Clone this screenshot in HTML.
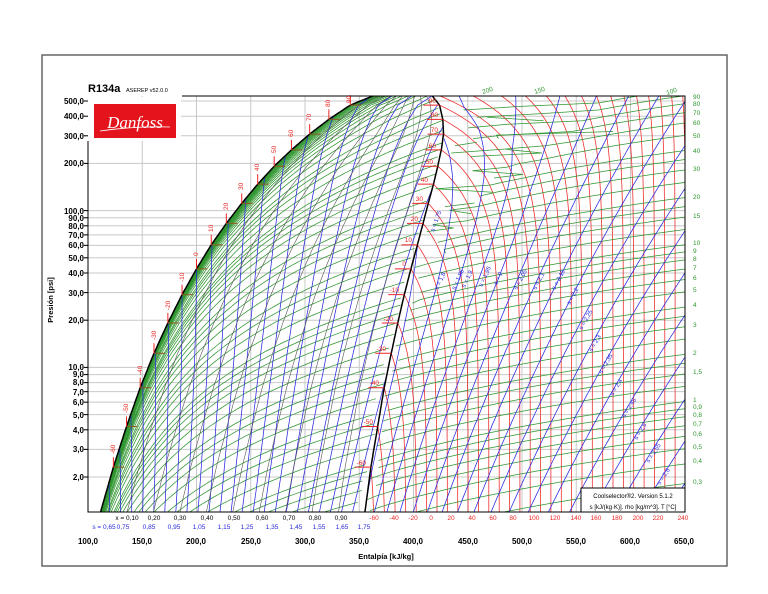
<!DOCTYPE html>
<html><head><meta charset="utf-8">
<style>
html,body{margin:0;padding:0;background:#fff;}
svg{display:block;font-family:"Liberation Sans",sans-serif;}
</style></head>
<body>
<svg id="s" width="768" height="594" viewBox="0 0 768 594" xmlns="http://www.w3.org/2000/svg">
<rect x="0" y="0" width="768" height="594" fill="#fff"/>
<rect x="42" y="55" width="685" height="511" fill="#fff" stroke="#666" stroke-width="1.5"/>
<defs><clipPath id="cp"><rect x="88" y="96" width="597" height="416"/></clipPath></defs>
<g id="grid" stroke="#c8c8c8" stroke-width="1" fill="none"></g>
<g clip-path="url(#cp)" fill="none" stroke-width="0.75">
<g id="gRed" stroke="#ee2424"></g>
<g id="gGreen" stroke="#2f962f"></g>
<g id="gBlue" stroke="#2828e0"></g>
<g id="gBlack" stroke="#555" stroke-width="0.6"></g>
<g id="gSat" stroke="#000" stroke-width="1.5"></g>
</g>
<g id="ticks" stroke-width="1"></g>
<rect x="88" y="97" width="93" height="44" fill="#fff"/>
<rect x="94" y="104" width="82" height="34" fill="#e3141c"/>
<text x="135" y="128" font-family="Liberation Serif,serif" font-style="italic" font-size="17" fill="#fff" text-anchor="middle">Danfoss</text>
<path d="M100 131 Q135 126 170 127" stroke="#fff" stroke-width="0.8" fill="none"/>
<path d="M88 141 V512 H685 V96 H182" stroke="#000" stroke-width="1" fill="none"/>
<text x="88" y="92" font-size="11" font-weight="bold" fill="#000">R134a</text>
<text x="126" y="92" font-size="5.5" fill="#000">ASEREP v52.0.0</text>
<g font-size="8" font-weight="bold" fill="#000" text-anchor="end">
<text x="84" y="104">500,0</text>
<text x="84" y="119">400,0</text>
<text x="84" y="139">300,0</text>
<text x="84" y="166">200,0</text>
<text x="84" y="214">100,0</text>
<text x="84" y="221">90,0</text>
<text x="84" y="229">80,0</text>
<text x="84" y="238">70,0</text>
<text x="84" y="248">60,0</text>
<text x="84" y="261">50,0</text>
<text x="84" y="276">40,0</text>
<text x="84" y="296">30,0</text>
<text x="84" y="323">20,0</text>
<text x="84" y="370">10,0</text>
<text x="84" y="377">9,0</text>
<text x="84" y="385">8,0</text>
<text x="84" y="395">7,0</text>
<text x="84" y="405">6,0</text>
<text x="84" y="418">5,0</text>
<text x="84" y="433">4,0</text>
<text x="84" y="452">3,0</text>
<text x="84" y="480">2,0</text>
</g>
<text transform="translate(53,300) rotate(-90)" font-size="7.5" font-weight="bold" text-anchor="middle">Presión [psi]</text>
<g font-size="8" font-weight="bold" fill="#000" text-anchor="middle">
<text x="88" y="544">100,0</text><text x="142" y="544">150,0</text><text x="196" y="544">200,0</text>
<text x="251" y="544">250,0</text><text x="305" y="544">300,0</text><text x="359" y="544">350,0</text>
<text x="413" y="544">400,0</text><text x="468" y="544">450,0</text><text x="522" y="544">500,0</text>
<text x="576" y="544">550,0</text><text x="630" y="544">600,0</text><text x="684" y="544">650,0</text>
</g>
<text x="386" y="559" font-size="7.5" font-weight="bold" text-anchor="middle">Entalpía [kJ/kg]</text>
<g font-size="6.5" fill="#000" text-anchor="middle">
<text x="127" y="520">x = 0,10</text><text x="154" y="520">0,20</text><text x="180" y="520">0,30</text>
<text x="207" y="520">0,40</text><text x="234" y="520">0,50</text><text x="262" y="520">0,60</text>
<text x="289" y="520">0,70</text><text x="315" y="520">0,80</text><text x="341" y="520">0,90</text>
</g>
<g font-size="6.5" fill="#2828e0" text-anchor="middle">
<text x="104" y="529">s = 0,65</text><text x="123" y="529">0,75</text><text x="149" y="529">0,85</text>
<text x="174" y="529">0,95</text><text x="199" y="529">1,05</text><text x="224" y="529">1,15</text>
<text x="247" y="529">1,25</text><text x="272" y="529">1,35</text><text x="296" y="529">1,45</text>
<text x="319" y="529">1,55</text><text x="342" y="529">1,65</text><text x="364" y="529">1,75</text>
</g>
<g font-size="6.5" fill="#ee2424" text-anchor="middle">
<text x="374" y="520">-60</text><text x="394" y="520">-40</text><text x="413" y="520">-20</text>
<text x="431" y="520">0</text><text x="451" y="520">20</text><text x="472" y="520">40</text>
<text x="493" y="520">60</text><text x="513" y="520">80</text><text x="534" y="520">100</text>
<text x="555" y="520">120</text><text x="576" y="520">140</text><text x="596" y="520">160</text>
<text x="617" y="520">180</text><text x="638" y="520">200</text><text x="658" y="520">220</text>
<text x="683" y="520">240</text>
</g>
<g font-size="6.5" fill="#2f962f">
<text x="693" y="99">90</text><text x="693" y="106">80</text><text x="693" y="115">70</text>
<text x="693" y="125">60</text><text x="693" y="138">50</text><text x="693" y="153">40</text>
<text x="693" y="171">30</text><text x="693" y="199">20</text><text x="693" y="218">15</text>
<text x="693" y="245">10</text><text x="693" y="253">9</text><text x="693" y="261">8</text>
<text x="693" y="270">7</text><text x="693" y="280">6</text><text x="693" y="292">5</text>
<text x="693" y="307">4</text><text x="693" y="327">3</text><text x="693" y="355">2</text>
<text x="693" y="374">1,5</text><text x="693" y="402">1</text><text x="693" y="409">0,9</text>
<text x="693" y="417">0,8</text><text x="693" y="426">0,7</text><text x="693" y="436">0,6</text>
<text x="693" y="449">0,5</text><text x="693" y="463">0,4</text><text x="693" y="484">0,3</text>
<text transform="translate(483,94) rotate(-18)">200</text>
<text transform="translate(535,94) rotate(-18)">150</text>
<text transform="translate(667,95) rotate(-18)">100</text>
</g>
<g font-size="6.5" fill="#ee2424">
<text transform="translate(115,454) rotate(-90)">-60</text>
<text transform="translate(128,413) rotate(-90)">-50</text>
<text transform="translate(142,375) rotate(-90)">-40</text>
<text transform="translate(156,340) rotate(-90)">-30</text>
<text transform="translate(170,310) rotate(-90)">-20</text>
<text transform="translate(184,282) rotate(-90)">-10</text>
<text transform="translate(198,256) rotate(-90)">0</text>
<text transform="translate(213,232) rotate(-90)">10</text>
<text transform="translate(228,210) rotate(-90)">20</text>
<text transform="translate(243,190) rotate(-90)">30</text>
<text transform="translate(259,171) rotate(-90)">40</text>
<text transform="translate(276,153) rotate(-90)">50</text>
<text transform="translate(293,137) rotate(-90)">60</text>
<text transform="translate(311,121) rotate(-90)">70</text>
<text transform="translate(330,107) rotate(-90)">80</text>
<text transform="translate(351,103) rotate(-90)">90</text>
</g>
<g font-size="6.5" fill="#ee2424" text-anchor="end">
<text x="366" y="465">-60</text><text x="373" y="424">-50</text><text x="379" y="385">-40</text>
<text x="386" y="351">-30</text><text x="393" y="321">-20</text><text x="399" y="292">-10</text>
<text x="406" y="266">0</text><text x="412" y="242">10</text><text x="418" y="221">20</text>
<text x="423" y="201">30</text><text x="428" y="182">40</text><text x="433" y="164">50</text>
<text x="436" y="148">60</text><text x="438" y="132">70</text><text x="438" y="117">80</text>
<text x="436" y="103">90</text>
</g>
<g font-size="6" fill="#2828e0">
<text transform="translate(434,232) rotate(-70)">s = 1,75</text>
<text transform="translate(438,290) rotate(-65)">s = 1,8</text>
<text transform="translate(455,290) rotate(-65)">s = 1,85</text>
<text transform="translate(465,288) rotate(-65)">s = 1,9</text>
<text transform="translate(482,287) rotate(-65)">s = 1,95</text>
<text transform="translate(497,285) rotate(-65)">s = 2</text>
<text transform="translate(517,290) rotate(-62)">s = 2,05</text>
<text transform="translate(536,290) rotate(-62)">s = 2,1</text>
<text transform="translate(555,290) rotate(-62)">s = 2,15</text>
<text transform="translate(570,305) rotate(-62)">s = 2,2</text>
<text transform="translate(582,330) rotate(-60)">s = 2,25</text>
<text transform="translate(592,352) rotate(-60)">s = 2,3</text>
<text transform="translate(602,374) rotate(-60)">s = 2,35</text>
<text transform="translate(613,396) rotate(-58)">s = 2,4</text>
<text transform="translate(625,418) rotate(-58)">s = 2,45</text>
<text transform="translate(637,440) rotate(-58)">s = 2,5</text>
<text transform="translate(649,463) rotate(-56)">s = 2,55</text>
<text transform="translate(660,485) rotate(-56)">s = 2,6</text>
</g>
<rect x="581" y="488" width="104" height="24" fill="#fff" stroke="#000" stroke-width="1"/>
<text x="633" y="498" font-size="6" text-anchor="middle">Coolselector®2. Version 5.1.2</text>
<text x="633" y="509" font-size="6" text-anchor="middle">s [kJ/(kg·K)]. rho [kg/m^3]. T [°C]</text>
</svg>
<script>
(function(){
var NS="http://www.w3.org/2000/svg";
var L5=Math.log10(500);
function Y(p){return 101+(L5-Math.log10(p))*156.8;}
function HX(h){return 88+1.085*(h-100);}
function XI(T){return 375+(T+60)*1.035;}
var sat=[[-70,1.16,111,355],[-60,2.31,123.4,360.7],[-50,4.2,135.5,367],[-40,7.42,148.1,373],[-30,12.3,160.8,379.5],[-20,19.2,173.6,385.5],[-10,29.1,186.7,391.5],[0,42.5,200,397.6],[10,60.5,213.6,403.6],[20,82.9,227.5,408.8],[30,111.2,241.7,413.6],[40,147.4,256.4,418.4],[50,191.8,271.6,422.4],[60,243.9,287.5,425.6],[70,307.5,304.3,427.7],[80,381.9,322,427],[90,470.5,341.7,424],[100,576,373,414]];
var zt=[[-70,.02],[-60,.03],[-40,.05],[-20,.08],[0,.11],[20,.16],[40,.22],[60,.30],[80,.40],[90,.48],[100,.6]];
function S(T){
 if(T<-70)T=-70;if(T>100)T=100;
 var i=Math.min(16,Math.floor((T+70)/10));var a=sat[i],b=sat[i+1];var f=(T-a[0])/10;
 return {p:Math.exp(Math.log(a[1])+f*(Math.log(b[1])-Math.log(a[1]))),hL:a[2]+f*(b[2]-a[2]),hV:a[3]+f*(b[3]-a[3])};
}
function Tsat(p){
 if(p<=1.16)return -71; if(p>=576)return 100.5;
 for(var i=0;i<17;i++){if(p<=sat[i+1][1]){var a=sat[i],b=sat[i+1];var f=(Math.log(p)-Math.log(a[1]))/(Math.log(b[1])-Math.log(a[1]));return a[0]+10*f;}}
 return 100;
}
function xvP(p){var t=Tsat(p);if(t>100)return -1e9;return HX(S(t).hV);}
var d100=XI(100)-HX(414);
function diffT(T){if(T<=100)return Math.max(0,XI(T)-HX(S(T).hV));return d100*Math.exp(-(T-100)/150);}
function Ps(T){if(T<=100)return S(T).p;return 576*Math.exp(0.012*(T-100));}
function zv(T){if(T>100)return .6*Math.exp(-(T-100)/150);if(T<-70)return .02;for(var i=0;i<zt.length-1;i++){if(T<=zt[i+1][0]){var f=(T-zt[i][0])/(zt[i+1][0]-zt[i][0]);return zt[i][1]+f*(zt[i+1][1]-zt[i][1]);}}return .6;}
function rr(T,p){return Math.pow(Math.min(1,p/Ps(T)),1.6);}
function dep(T,p){return diffT(T)*rr(T,p);}
function Z(T,p){return Math.max(0.3,1-zv(T)*rr(T,p));}
function add(g,segs){var d="";segs.forEach(function(s){if(s.length<2)return;d+="M"+s.map(function(q){return q[0].toFixed(1)+" "+q[1].toFixed(1);}).join("L");});if(!d)return;var e=document.createElementNS(NS,"path");e.setAttribute("d",d);document.getElementById(g).appendChild(e);}
function collect(fn,n){var segs=[],cur=[];for(var i=0;i<=n;i++){var q=fn(i/n);if(q){cur.push(q);}else{if(cur.length)segs.push(cur);cur=[];}}if(cur.length)segs.push(cur);return segs;}
var grid=document.getElementById("grid");
function gl(x1,y1,x2,y2){var e=document.createElementNS(NS,"line");e.setAttribute("x1",x1);e.setAttribute("y1",y1);e.setAttribute("x2",x2);e.setAttribute("y2",y2);grid.appendChild(e);}
for(var h=150;h<650;h+=50){gl(HX(h),96,HX(h),512);}
[500,400,300,200,100,90,80,70,60,50,40,30,20,10,9,8,7,6,5,4,3,2].forEach(function(p){var y=Y(p);gl(80,y,685,y);});
add("gSat",collect(function(t){var T=-72+t*172;var s=S(T);var p=T<-70?1.16*Math.exp((T+70)*0.085):s.p;return [HX(s.hL-(T<-70?( -70-T)*1.2:0)),Y(p)];},200));
add("gSat",collect(function(t){var T=-72+t*172;var s=S(T);var p=T<-70?1.16*Math.exp((T+70)*0.085):s.p;return [HX(s.hV-(T<-70?(-70-T)*0.6:0)),Y(p)];},200));
for(var T=-60;T<=240;T+=10){(function(T){var pmax=T<100?Ps(T):600;
 add("gRed",collect(function(t){var p=1.1*Math.pow(pmax/1.1,t);var x=XI(T)-dep(T,p);if(x<xvP(p)-0.5)return null;return [x,Y(p)];},90));})(T);}
var rhos=[0.3,0.4,0.5,0.6,0.7,0.8,0.9,1,1.25,1.5,1.75,2,2.5,3,3.5,4,5,6,7,8,9,10,12.5,15,17.5,20,25,30,35,40,50,60,70,80,90,100,125,150,175,200,250,300,350,400,450,500,550,600,650,700,750,800,850,900,950,1000,1050,1100,1150,1200,1250,1300,1350];
rhos.forEach(function(rho){
 add("gGreen",collect(function(t){var p=1.1*Math.pow(600/1.1,t);var pk=p*6.895;var TK=pk/(0.0815*rho);
  for(var k=0;k<40;k++){TK=pk/(0.0815*rho*Z(TK-273.15,p));}
  var T=TK-273.15;if(T<Tsat(p)||T>300)return null;var x=XI(T)-dep(T,p);if(x<xvP(p)-0.5)return null;return [x,Y(p)];},120));
 add("gGreen",collect(function(t){var T=-71+t*171;var s=S(T);var TK=T+273.15;var vV=0.0815*TK*(1-zv(T))/(s.p*6.895);var vL=0.0007+0.0000015*(T+70);var q=(1/rho-vL)/(vV-vL);if(q<0||q>1)return null;return [HX(s.hL+q*(s.hV-s.hL)),Y(s.p)];},340));
});
for(var sv=1.75;sv<=2.96;sv+=0.05){(function(sv){var T0=203.15*Math.exp((sv-1.80)/0.955);
 add("gBlue",collect(function(t){var p=1.1*Math.pow(600/1.1,t);var TK=T0*Math.pow(p/1.2,0.0848);var T=TK-273.15;if(T<Tsat(p))return null;var x=XI(T)-dep(T,p);if(x<xvP(p)-0.5)return null;return [x,Y(p)];},120));})(sv);}
for(var sd=0.65;sd<=1.80;sd+=0.05){(function(sd){
 add("gBlue",collect(function(t){var T=-71+t*171;var s=S(T);var TK=T+273.15;var sL=1+1.33*Math.log(TK/273.15);var sV=sL+(s.hV-s.hL)/TK;var q=(sd-sL)/(sV-sL);if(q<0||q>1)return null;return [HX(s.hL+q*(s.hV-s.hL)),Y(s.p)];},340));})(sd);}
for(var qq=1;qq<=9;qq++){(function(q){
 add("gBlack",collect(function(t){var T=-71+t*171;var s=S(T);return [HX(s.hL+q*(s.hV-s.hL)),Y(s.p)];},200));})(qq/10);}
var tk=document.getElementById("ticks");
function tl(x1,y1,x2,y2,c){var e=document.createElementNS(NS,"line");e.setAttribute("x1",x1);e.setAttribute("y1",y1);e.setAttribute("x2",x2);e.setAttribute("y2",y2);e.setAttribute("stroke",c);tk.appendChild(e);}
for(var T2=-60;T2<=90;T2+=10){var s=S(T2);var y=Y(s.p);var xl=HX(s.hL),xv=HX(s.hV);
 tl(xl,y,xl,y-10,"#ee2424");tl(xl,y,xl+11,y,"#8a5a1a");tl(xv-16,y,xv,y,"#ee2424");}
[500,400,300,200,100,90,80,70,60,50,40,30,20,10,9,8,7,6,5,4,3,2].forEach(function(p){tl(84,Y(p),88,Y(p),"#000");});
})();
</script>
</body></html>
